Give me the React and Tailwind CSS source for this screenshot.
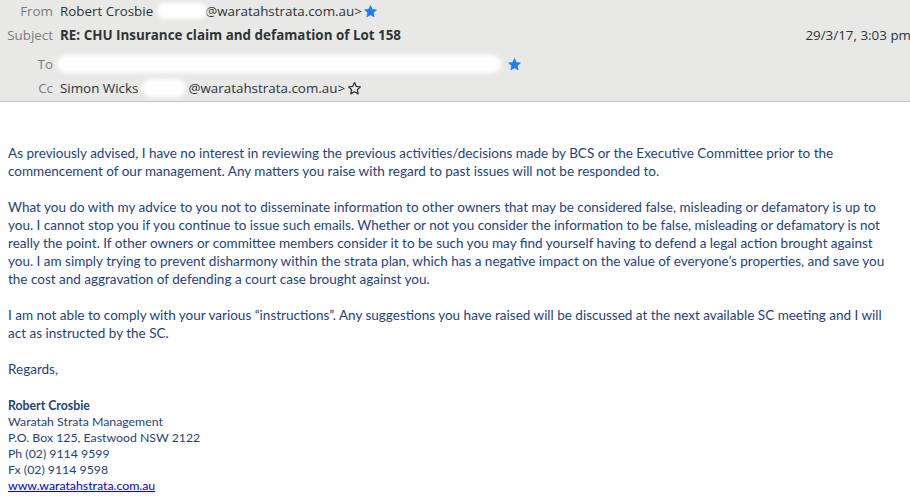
import React from 'react';

const Star = ({ filled }) => (
    <svg width="15" height="15" viewBox="0 0 24 24" className="shrink-0">
        <path
            d="M12 2.5l2.9 6.1 6.6.8-4.9 4.6 1.3 6.6L12 17.3l-5.9 3.3 1.3-6.6-4.9-4.6 6.6-.8z"
            fill={filled ? '#1a7ff5' : 'none'}
            stroke={filled ? '#1a7ff5' : '#2e3436'}
            strokeWidth={filled ? 1 : 2}
            strokeLinejoin="round"
        />
    </svg>
);

const Smudge = ({ className }) => (
    <span className={`inline-block bg-white rounded-full blur-[2px] ${className}`} />
);

const Row = ({ label, className, children }) => (
    <div className={`flex items-center h-[20px] ${className}`}>
        <div className="w-[53px] text-right text-[#7b7d7b] shrink-0">{label}</div>
        <div className="flex items-center pl-[7px] text-[#2e3436] flex-1">{children}</div>
    </div>
);

const App = () => {
    return (
        <div className="w-[910px] h-[504px] overflow-hidden bg-white">
            {/* Header */}
            <div className="w-[924px] h-[102px] pt-[1px] bg-[#e8e8e7] border-b border-[#c3c3c1] text-[13.4px] font-['Open_Sans',sans-serif]">
                <Row label="From">
                    <span>Robert Crosbie</span>
                    <Smudge className="w-[50px] h-[16px] ml-[4px] mr-[-2px]" />
                    <span>@waratahstrata.com.au&gt;</span>
                    <span className="ml-[1px]"><Star filled /></span>
                </Row>
                <Row label="Subject" className="mt-[4px]">
                    <span className="font-bold">RE: CHU Insurance claim and defamation of Lot 158</span>
                    <span className="ml-auto pr-[13px]">29/3/17, 3:03 pm</span>
                </Row>
                <Row label="To" className="mt-[9px]">
                    <Smudge className="w-[444px] h-[18px] ml-[-3px]" />
                    <span className="ml-[6px]"><Star filled /></span>
                </Row>
                <Row label="Cc" className="mt-[4px]">
                    <span>Simon Wicks</span>
                    <Smudge className="w-[44px] h-[18px] ml-[4px] mr-[2px]" />
                    <span>@waratahstrata.com.au&gt;</span>
                    <span className="ml-[2px]"><Star /></span>
                </Row>
            </div>

            {/* Body */}
            <div className="px-[8px] pt-[42px] text-[13.5px] leading-[18px] text-[#1f437a] font-['Lato',sans-serif] whitespace-nowrap">
                <p>
                    As previously advised, I have no interest in reviewing the previous activities/decisions made by BCS or the Executive Committee prior to the
                    <br />
                    commencement of our management. Any matters you raise with regard to past issues will not be responded to.
                </p>
                <p className="mt-[18px]">
                    What you do with my advice to you not to disseminate information to other owners that may be considered false, misleading or defamatory is up to
                    <br />
                    you. I cannot stop you if you continue to issue such emails. Whether or not you consider the information to be false, misleading or defamatory is not
                    <br />
                    really the point. If other owners or committee members consider it to be such you may find yourself having to defend a legal action brought against
                    <br />
                    you. I am simply trying to prevent disharmony within the strata plan, which has a negative impact on the value of everyone’s properties, and save you
                    <br />
                    the cost and aggravation of defending a court case brought against you.
                </p>
                <p className="mt-[18px]">
                    I am not able to comply with your various “instructions”. Any suggestions you have raised will be discussed at the next available SC meeting and I will
                    <br />
                    act as instructed by the SC.
                </p>
                <p className="mt-[18px]">Regards,</p>

                {/* Signature */}
                <div className="mt-[20px] text-[12.3px] leading-[16px]">
                    <div className="font-bold">Robert Crosbie</div>
                    <div>Waratah Strata Management</div>
                    <div>P.O. Box 125, Eastwood NSW 2122</div>
                    <div>Ph (02) 9114 9599</div>
                    <div>Fx (02) 9114 9598</div>
                    <a href="#" className="text-[#0000ee] underline">www.waratahstrata.com.au</a>
                </div>
            </div>
        </div>
    );
};

export default App;
